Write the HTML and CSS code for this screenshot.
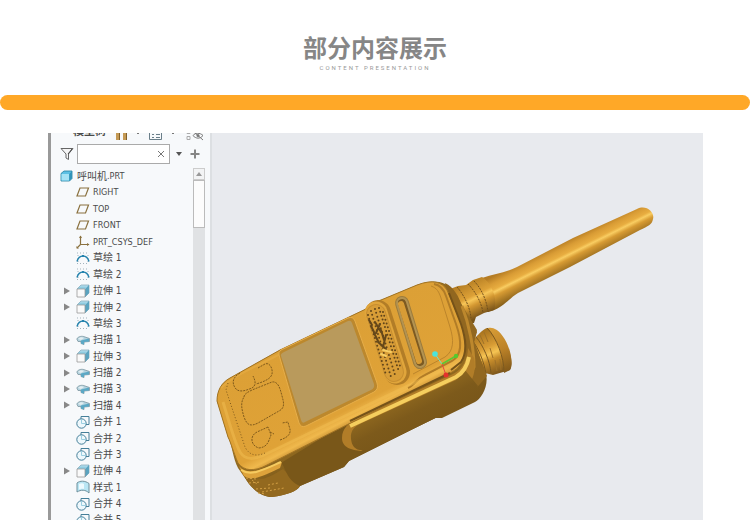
FILE: index.html
```html
<!DOCTYPE html>
<html lang="zh-CN">

<head>
    <meta charset="UTF-8">
    <meta name="viewport" content="width=device-width, initial-scale=1.0">
    <title>部分内容展示</title>
    <link rel="stylesheet" href="styles.css">
</head>

<body>
    <!-- icons shared by the model tree -->
    <svg class="sprite" aria-hidden="true">
        <symbol id="part" viewBox="0 0 14 14">
            <path d="M1 4.500L4 2h8v7.500L9.500 12H1z" fill="#5cc0e4" stroke="#217e9f" stroke-width=".8" />
            <path d="M1.500 5h7.500v6.500H1.500z" fill="#a5e2f5" />
            <path d="M9.200 5L12 2.300v7L9.200 12z" fill="#3293b8" />
        </symbol>
        <symbol id="plane" viewBox="0 0 14 14">
            <path d="M4 3h8.500L9.500 11H1z" fill="none" stroke="#8a713f" stroke-width="1.200" />
        </symbol>
        <symbol id="csys" viewBox="0 0 14 14">
            <path d="M4.500 1v8.500H13M4.500 9.500L1 13" fill="none" stroke="#8a713f" stroke-width="1.200" />
            <path d="M3 3l1.500-2.500L6 3zM11 8l2.500 1.500L11 11zM.5 11v2.500H3z" fill="#8a713f" />
        </symbol>
        <symbol id="sketch" viewBox="0 0 14 14">
            <path d="M1 2h12M1 12.500h12M2 4v8M12 4v8" fill="none" stroke="#a3b2bb" stroke-dasharray="1 2" />
            <path d="M1 10.500C3 3 11 3 13 10.500" fill="none" stroke="#2583ad" stroke-width="1.500" />
            <path d="M6 4h2v2H6z" fill="#2583ad" />
        </symbol>
        <symbol id="extrude" viewBox="0 0 14 14">
            <path d="M1 5l4-4h8v8l-4 4z" fill="#b7dfee" stroke="#7da4b4" stroke-width=".7" />
            <path d="M9 5l4-4v8l-4 4z" fill="#5ba4c0" />
            <path d="M4 2.500h7L8.500 5H1.500z" fill="#8fcbe0" />
            <path d="M1 5h8v8H1z" fill="#fafafa" stroke="#9b9b9b" stroke-width=".8" />
        </symbol>
        <symbol id="sweep" viewBox="0 0 14 14">
            <path d="M.8 6C2 3.500 6 2.500 9 4l4.500 1.500v3L8 9v2.500L5 10.500V8.500L2 8.500z" fill="#b4d3df" stroke="#7c959f" stroke-width=".8" />
            <path d="M5 7.500l8-2v3L8 9v2.500L5 10.500z" fill="#5ba8c5" />
            <path d="M2 6C4 4 6 4 8 5L5 7z" fill="#e4eef1" />
        </symbol>
        <symbol id="merge" viewBox="0 0 14 14">
            <path d="M5 1.500h8v8h-3M5 1.500v3" fill="none" stroke="#457f99" />
            <circle cx="5.500" cy="8.500" r="4.700" fill="#eef8fc" stroke="#457f99" />
            <path d="M5.500 4v4.500H10" fill="none" stroke="#9bcfe1" />
        </symbol>
        <symbol id="style" viewBox="0 0 14 14">
            <path d="M1 3C4 .5 9 .5 13 3.500V13C9.500 9.500 5 9.500 1 12z" fill="#b9e6f4" stroke="#6f909c" />
            <path d="M3 4c2-1 4-1 5 0v5c-2-.5-4 0-5 .5z" fill="#edfafe" />
        </symbol>
        <symbol id="arrow" viewBox="0 0 6 8">
            <path d="M0 .5L6 4 0 7.500z" fill="#888" />
        </symbol>
    </svg>

    <header>
        <h1>部分内容展示</h1>
        <p>CONTENT PRESENTATION</p>
    </header>
    <div class="bar"></div>

    <main class="viewer">
        <aside class="panel">
            <div class="tools">
                <b>模型树</b>
                <svg class="tool-icons" viewBox="0 0 90 8" aria-hidden="true">
                    <path d="M0 0h4v7H0zM7 0h4v7H7z" fill="#c59a55" />
                    <path d="M3 0h1v7H3zM10 0h1v7h-1z" fill="#80602b" />
                    <path d="M21 0h2v1h-2zM56 0h2v1h-2z" fill="#777" />
                    <path d="M33.500 0v6.500h12V0M36 1.500h2M40 1.500h4M36 4.500h2M40 4.500h4" fill="none" stroke="#6a7e89" />
                    <path d="M71 0v.5h3V0M71 3.500h3v3h-3z" fill="none" stroke="#aaa" />
                    <path d="M77 2.500C79-.5 84-.5 87 2.500c-3 3.500-7 3.500-10 0zM78-1l9 8" fill="none" stroke="#777" />
                    <circle cx="82" cy="2.500" r="1.500" fill="#777" />
                </svg>
            </div>
            <div class="filter">
                <svg class="funnel" viewBox="0 0 14 14" aria-hidden="true">
                    <path d="M1 1.500h12L8.500 7v5.500L6 11V7z" fill="#f5f5f5" stroke="#666" />
                    <path d="M8 7l4-5" stroke="#444" />
                </svg>
                <div class="search">
                    <input type="text" aria-label="搜索">
                    <button type="button" class="clear" aria-label="清除">
                        <svg viewBox="0 0 8 8"><path d="M1 1l6 6M7 1L1 7" stroke="#777" /></svg>
                    </button>
                </div>
                <button type="button" class="more" aria-label="选项">
                    <svg viewBox="0 0 6 4"><path d="M0 0h6L3 4z" fill="#555" /></svg>
                </button>
                <button type="button" class="add" aria-label="添加">
                    <svg viewBox="0 0 10 10"><path d="M5 .5v9M.5 5h9" stroke="#858585" stroke-width="2" /></svg>
                </button>
            </div>
            <div class="tree-area">
                <ul class="tree">
                    <li class="root"><svg class="icon"><use href="#part" /></svg><span>呼叫机</span>.PRT</li>
                    <li><svg class="icon"><use href="#plane" /></svg>RIGHT</li>
                    <li><svg class="icon"><use href="#plane" /></svg>TOP</li>
                    <li><svg class="icon"><use href="#plane" /></svg>FRONT</li>
                    <li><svg class="icon"><use href="#csys" /></svg>PRT_CSYS_DEF</li>
                    <li><svg class="icon"><use href="#sketch" /></svg><span>草绘 1</span></li>
                    <li><svg class="icon"><use href="#sketch" /></svg><span>草绘 2</span></li>
                    <li><button type="button" aria-label="展开"><svg><use href="#arrow" /></svg></button><svg class="icon"><use href="#extrude" /></svg><span>拉伸 1</span></li>
                    <li><button type="button" aria-label="展开"><svg><use href="#arrow" /></svg></button><svg class="icon"><use href="#extrude" /></svg><span>拉伸 2</span></li>
                    <li><svg class="icon"><use href="#sketch" /></svg><span>草绘 3</span></li>
                    <li><button type="button" aria-label="展开"><svg><use href="#arrow" /></svg></button><svg class="icon"><use href="#sweep" /></svg><span>扫描 1</span></li>
                    <li><button type="button" aria-label="展开"><svg><use href="#arrow" /></svg></button><svg class="icon"><use href="#extrude" /></svg><span>拉伸 3</span></li>
                    <li><button type="button" aria-label="展开"><svg><use href="#arrow" /></svg></button><svg class="icon"><use href="#sweep" /></svg><span>扫描 2</span></li>
                    <li><button type="button" aria-label="展开"><svg><use href="#arrow" /></svg></button><svg class="icon"><use href="#sweep" /></svg><span>扫描 3</span></li>
                    <li><button type="button" aria-label="展开"><svg><use href="#arrow" /></svg></button><svg class="icon"><use href="#sweep" /></svg><span>扫描 4</span></li>
                    <li><svg class="icon"><use href="#merge" /></svg><span>合并 1</span></li>
                    <li><svg class="icon"><use href="#merge" /></svg><span>合并 2</span></li>
                    <li><svg class="icon"><use href="#merge" /></svg><span>合并 3</span></li>
                    <li><button type="button" aria-label="展开"><svg><use href="#arrow" /></svg></button><svg class="icon"><use href="#extrude" /></svg><span>拉伸 4</span></li>
                    <li><svg class="icon"><use href="#style" /></svg><span>样式 1</span></li>
                    <li><svg class="icon"><use href="#merge" /></svg><span>合并 4</span></li>
                    <li><svg class="icon"><use href="#merge" /></svg><span>合并 5</span></li>
                </ul>
                <div class="scrollbar">
                    <button type="button" aria-label="向上滚动">
                        <svg viewBox="0 0 6 4"><path d="M0 4h6L3 0z" fill="#999" /></svg>
                    </button>
                    <div class="thumb"></div>
                </div>
            </div>
        </aside>

        <svg class="model" viewBox="212 133 491 387" role="img" aria-label="呼叫机模型">
            <defs>
                <linearGradient id="antenna" gradientUnits="userSpaceOnUse" x1="570" y1="238" x2="584" y2="266">
                    <stop offset="0" stop-color="#b57c23" />
                    <stop offset=".2" stop-color="#d99c35" />
                    <stop offset=".38" stop-color="#e8ad40" />
                    <stop offset=".46" stop-color="#f9cd62" />
                    <stop offset=".58" stop-color="#d79b33" />
                    <stop offset="1" stop-color="#7d5817" />
                </linearGradient>
                <linearGradient id="collar" gradientUnits="userSpaceOnUse" x1="465" y1="283" x2="481" y2="316">
                    <stop offset="0" stop-color="#b67f24" />
                    <stop offset=".4" stop-color="#dda137" />
                    <stop offset=".5" stop-color="#f7c658" />
                    <stop offset=".65" stop-color="#d39731" />
                    <stop offset="1" stop-color="#77531a" />
                </linearGradient>
                <linearGradient id="knob" gradientUnits="userSpaceOnUse" x1="480" y1="332" x2="498" y2="375">
                    <stop offset="0" stop-color="#a8741f" />
                    <stop offset=".35" stop-color="#d79b34" />
                    <stop offset=".52" stop-color="#f5c453" />
                    <stop offset=".65" stop-color="#c68c2b" />
                    <stop offset="1" stop-color="#75511a" />
                </linearGradient>
                <linearGradient id="cap" gradientUnits="userSpaceOnUse" x1="492" y1="330" x2="509" y2="370">
                    <stop offset="0" stop-color="#d59a34" />
                    <stop offset=".5" stop-color="#bc8228" />
                    <stop offset="1" stop-color="#835a1a" />
                </linearGradient>
                <linearGradient id="face" gradientUnits="userSpaceOnUse" x1="325" y1="330" x2="370" y2="418">
                    <stop offset="0" stop-color="#dca036" />
                    <stop offset=".82" stop-color="#dfa237" />
                    <stop offset=".91" stop-color="#f0b94d" />
                    <stop offset="1" stop-color="#b98028" />
                </linearGradient>
                <linearGradient id="side" gradientUnits="userSpaceOnUse" x1="370" y1="410" x2="390" y2="450">
                    <stop offset="0" stop-color="#936b20" />
                    <stop offset=".5" stop-color="#7d5a1b" />
                    <stop offset="1" stop-color="#785619" />
                </linearGradient>
            </defs>

            <!-- antenna -->
            <path d="M482 278C494 274 505 273 517 267L573 238 637 209C646 204 655 212 653 219 652 225 648 226 640 230L570 267 518 293C509 298 503 309 488 312z" fill="url(#antenna)" />
            <path d="M450 289l8-3 8-1 7-5 9-3C493 284 498 301 494 310L484 313 476 317 474 323 462 324z" fill="url(#collar)" />
            <path d="M457 287c7 8 13 20 14 31M468 284c8 8 14 20 15 29M474 281c8 8 13 21 14 31" fill="none" stroke="#72501c" stroke-dasharray="2 1" />

            <!-- knob -->
            <path d="M467 345L476 337C480 333 482 330 487 328 501 328 517 359 510 370L493 375 485 373 484 384 470 389z" fill="url(#knob)" />
            <path d="M488 328C501 324 516 354 510 370L504 373C504 358 498 340 488 328z" fill="url(#cap)" />
            <path d="M472 340c7 9 12 22 14 34M476 337c7 8 14 24 15 36M487 328c10 10 17 30 17 44" fill="none" stroke="#7c591f" />
            <path d="M480 335l4 9M484 332l4 10M490 348l3 10M495 360l2 11M500 359l1 11" stroke="#9f7128" />

            <!-- body -->
            <path d="M217 401C217 391 221 383 230 378L280 350 347 318 370 307C372 303 377 301 381 300L417 285C433 279 445 281 453 290L462 305 477 330 474 342 486 374C489 386 481 399 475 402L442 418H435L349 461 344 467 300 486C298 491 286 495 272 497 262 497 253 490 247 481L238 468C233 459 232 444 228 437z" fill="url(#side)" />
            <path d="M445 283c9 4 14 14 17 23l15 26-3 10 13 34-14 16-8-40z" fill="#916720" />
            <path d="M462 306c7 18 12 42 12 61l-10 20" fill="none" stroke="#bd882d" stroke-width="3" />
            <path d="M237 464l9 12c14 8 25 0 37-7l17 17c-2 5-14 9-28 11-11-1-20-8-25-16z" fill="#93691f" />
            <path d="M281 463c5 4 5 17 19 23l44-19 5-6 86-43-65-10z" fill="#795719" />
            <path d="M239 466c9 11 25 2 43-4l-2 6c-15 7-27 14-36 8z" fill="#dea33b" />
            <path d="M241 470c10 7 24-1 40-8" fill="none" stroke="#f6cb60" stroke-width="2" />
            <path d="M246 478l10 1M249 483l12-1M256 489l14-1M262 492l22-4M268 485l10-2M252 480l5 4M258 493l8 1" stroke="#d4a044" stroke-dasharray="2 2" />

            <!-- side grip -->
            <path d="M342 438C342 428 349 423 357 419L453 374C464 369 468 356 468 348L474 358C478 378 466 391 456 397L361 451C352 450 342 448 342 438z" fill="#b17d28" />
            <path d="M351 439C350 430 355 426 362 423L456 380 465 370 478 386 472 400 442 415 371 449C356 453 352 447 351 439z" fill="url(#side)" />
            <path d="M350 426l106-49c7-4 11-10 13-20" fill="none" stroke="#f5ce5e" stroke-width="4" />

            <!-- front face -->
            <path d="M217 401C217 391 221 383 230 378L280 350 347 318 370 307C372 303 377 301 381 300L417 285C433 279 442 282 447 290L461 323C466 337 469 352 461 363 459 367 455 371 448 374L267 465C254 472 244 471 238 463 233 451 231 443 228 437z" fill="url(#face)" stroke="#a37525" />
            <path d="M449 293l12 31c5 15 7 28 0 38l-10 8" fill="none" stroke="#755219" stroke-width="2" />
            <path d="M350 421l100-48" fill="none" stroke="#755219" stroke-width="2" />
            <path d="M434 284c7 1 10 6 12 12l10 28c6 17 6 31-4 37l-27 14c-9 4-10 10-17 13" fill="none" stroke="#b17c27" stroke-width="2" />
            <path d="M431 286c6 2 8 6 10 12l9 29c4 13 4 24-5 30l-32 17" fill="none" stroke="#bc852b" />
            <path d="M223 402c6 19 11 39 17 50 6 9 14 7 24 3l112-54 65-31" fill="none" stroke="#f2bd52" stroke-width="3" opacity=".5" />
            <path d="M221 388c13-13 35-21 59-34l66-32" fill="none" stroke="#eeb44a" stroke-width="2" opacity=".4" />

            <!-- screen -->
            <path d="M281 350L348 318Q353 316 355 321L377 383Q379 389 374 392L306 426Q301 428 299 423L279 355Q278 352 281 350z" fill="#bc882d" stroke="#e7ae49" />
            <path d="M284 352L348 321Q351 320 352 323L374 384Q375 388 371 390L305 422Q302 424 301 420L281 356Q280 354 284 352z" fill="#b99a5c" />

            <!-- keypad -->
            <g fill="none" stroke="#805a1b" stroke-dasharray="2 1">
                <path d="M240 373c-7 4-9 10-4 16 4 4 11 1 16-1 5-3 3-8 1-12" />
                <path d="M258 368l7-4c5-2 8 5 7 10-1 5-9 8-16 10" />
                <path d="M244 397c0-3 4-5 8-7l20-8c6-1 8 6 10 14 2 7 3 12-3 15l-21 12c-8 4-11 2-14-6-2-7-4-14 0-20z" />
                <path d="M268 427l-11 5c-8 4-6 14 2 16 8-1 9-5 12-13zM270 432l4 2M280 440c9-3 12-7 9-14l-1-4-6 1" />
                <path d="M228 383l-2 7 19 57c4 8 11 10 20 6" stroke-dasharray="1 2" />
            </g>

            <!-- speaker -->
            <g fill="none" stroke-linecap="round">
                <path d="M378 313l19 59" stroke="#b27d27" stroke-width="26" />
                <path d="M376 313l19 59" stroke="#e0a53b" stroke-width="23" />
                <path d="M376 314l18 58" stroke="#c78e30" stroke-width="20" />
                <path d="M376 314l18 58" stroke="#d89d37" stroke-width="18" />
                <g stroke="#624519" stroke-width="2" stroke-dasharray="0 4">
                    <path d="M368 315l18 60" />
                    <path d="M371 311l20 66" />
                    <path d="M375 309l20 66" />
                    <path d="M379 308l20 64" />
                    <path d="M383 312l18 57" />
                </g>
                <path d="M369 320l3 5M371 326l3 6M374 333l4 8M375 322l6 10M380 324l-4 9M381 330l3 10M378 342l8 7M386 335l-3 12" stroke="#654719" stroke-width="2" />
                <path d="M383 350l8 2M381 354l5 2" stroke="#f7ce64" stroke-width="2" />
            </g>

            <!-- indicator slot -->
            <g fill="none" stroke-linecap="round">
                <path d="M402 303l18 59" stroke="#9c7c3d" stroke-width="14" />
                <path d="M402 303l18 59" stroke="#b39351" stroke-width="12" />
                <path d="M402 303l18 59" stroke="#7c5a22" stroke-width="8" />
                <path d="M401 304l18 57" stroke="#d79c36" stroke-width="6" />
            </g>

            <!-- axes -->
            <g fill="none" stroke-width="1">
                <path d="M442 364l-7-10" stroke="#6fe5cc" />
                <path d="M442 364l14-8" stroke="#5fc633" stroke-width="2" />
                <path d="M442 364l4 11" stroke="#e5483f" />
            </g>
            <circle cx="435" cy="354" r="2.800" fill="#4be4dc" />
            <circle cx="456" cy="356" r="2.200" fill="#55c92e" />
            <circle cx="446" cy="375" r="2.500" fill="#e4312c" />
        </svg>
    </main>
</body>

</html>
```
FILE: styles.css
```css
* {
    margin: 0;
    padding: 0;
    box-sizing: border-box;
}

body {
    background-color: #fff;
    font-family: 'DejaVu Sans Condensed', 'Noto Sans CJK SC', sans-serif;
    color: #4a4a4a;
}

button {
    display: flex;
    align-items: center;
    justify-content: center;
    background: none;
    border: none;
    cursor: pointer;
}

svg {
    display: block;
    flex: none;
}

.sprite {
    position: absolute;
    width: 0;
    height: 0;
}

header {
    padding-top: 30px;
    text-align: center;
    color: #868686;
}

h1 {
    font-family: 'Noto Sans CJK SC', sans-serif;
    font-size: 24px;
    line-height: 34px;
    font-weight: bold;
}

header p {
    font-family: Roboto, sans-serif;
    font-size: 6px;
    line-height: 8px;
    letter-spacing: 2px;
    color: #999;
}

.bar {
    height: 15px;
    margin: 23px 0;
    border-radius: 8px;
    background-color: #ffa827;
}

.viewer {
    display: grid;
    grid-template-columns: 164px 1fr;
    margin: 0 47px 12px 48px;
    background-color: #e8eaee;
}

/* the panel takes its height from the model beside it */
.panel {
    height: 0;
    min-height: 100%;
    overflow: hidden;
    background-color: #f7f9fb;
    border-left: 3px solid #999;
    border-right: 2px solid #dcdfe2;
}

.tools {
    display: flex;
    align-items: flex-end;
    gap: 10px;
    height: 8px;
    padding-left: 22px;
}

.tools b {
    font-size: 11px;
    line-height: 18px;
    white-space: nowrap;
}

.tool-icons {
    width: 90px;
    height: 8px;
}

.filter {
    display: flex;
    align-items: center;
    height: 27px;
    padding: 0 8px 2px 9px;
}

.funnel {
    width: 14px;
    height: 14px;
    margin-right: 3px;
}

.search {
    display: flex;
    flex: 1;
    min-width: 0;
    height: 20px;
    background-color: #fff;
    border: 1px solid #aaa;
}

.search input {
    flex: 1;
    min-width: 0;
    padding-left: 4px;
    background: none;
    border: none;
    outline: none;
    font-size: 10px;
}

.clear {
    width: 16px;
}

.clear svg {
    width: 8px;
    height: 8px;
}

.more {
    width: 18px;
}

.more svg {
    width: 6px;
    height: 4px;
}

.add {
    width: 14px;
}

.add svg {
    width: 10px;
    height: 10px;
}

.tree-area {
    display: flex;
    padding-right: 5px;
}

.tree {
    flex: 1;
    display: flex;
    flex-direction: column;
    justify-content: space-between;
    height: 360px;
    padding-left: 9px;
    list-style: none;
    font-size: 9px;
}

.tree li {
    display: flex;
    align-items: center;
    height: 16px;
    padding-left: 16px;
    line-height: 16px;
    white-space: nowrap;
}

.tree li.root {
    padding-left: 0;
}

.tree span {
    padding-top: 1px;
    font-size: 10px;
}

.tree button {
    width: 12px;
    margin-left: -12px;
    justify-content: flex-start;
}

.tree button svg {
    width: 6px;
    height: 8px;
}

.icon {
    width: 14px;
    height: 14px;
    margin-right: 3px;
}

.scrollbar {
    width: 12px;
    background-color: #e0e2e4;
}

.scrollbar button {
    width: 12px;
    height: 12px;
    background-color: #f3f4f5;
    border: 1px solid #ccc;
}

.scrollbar svg {
    width: 6px;
    height: 4px;
}

.thumb {
    height: 48px;
    background-color: #fcfcfc;
    border: 1px solid #bbb;
}

.model {
    width: 100%;
    height: auto;
}
```
